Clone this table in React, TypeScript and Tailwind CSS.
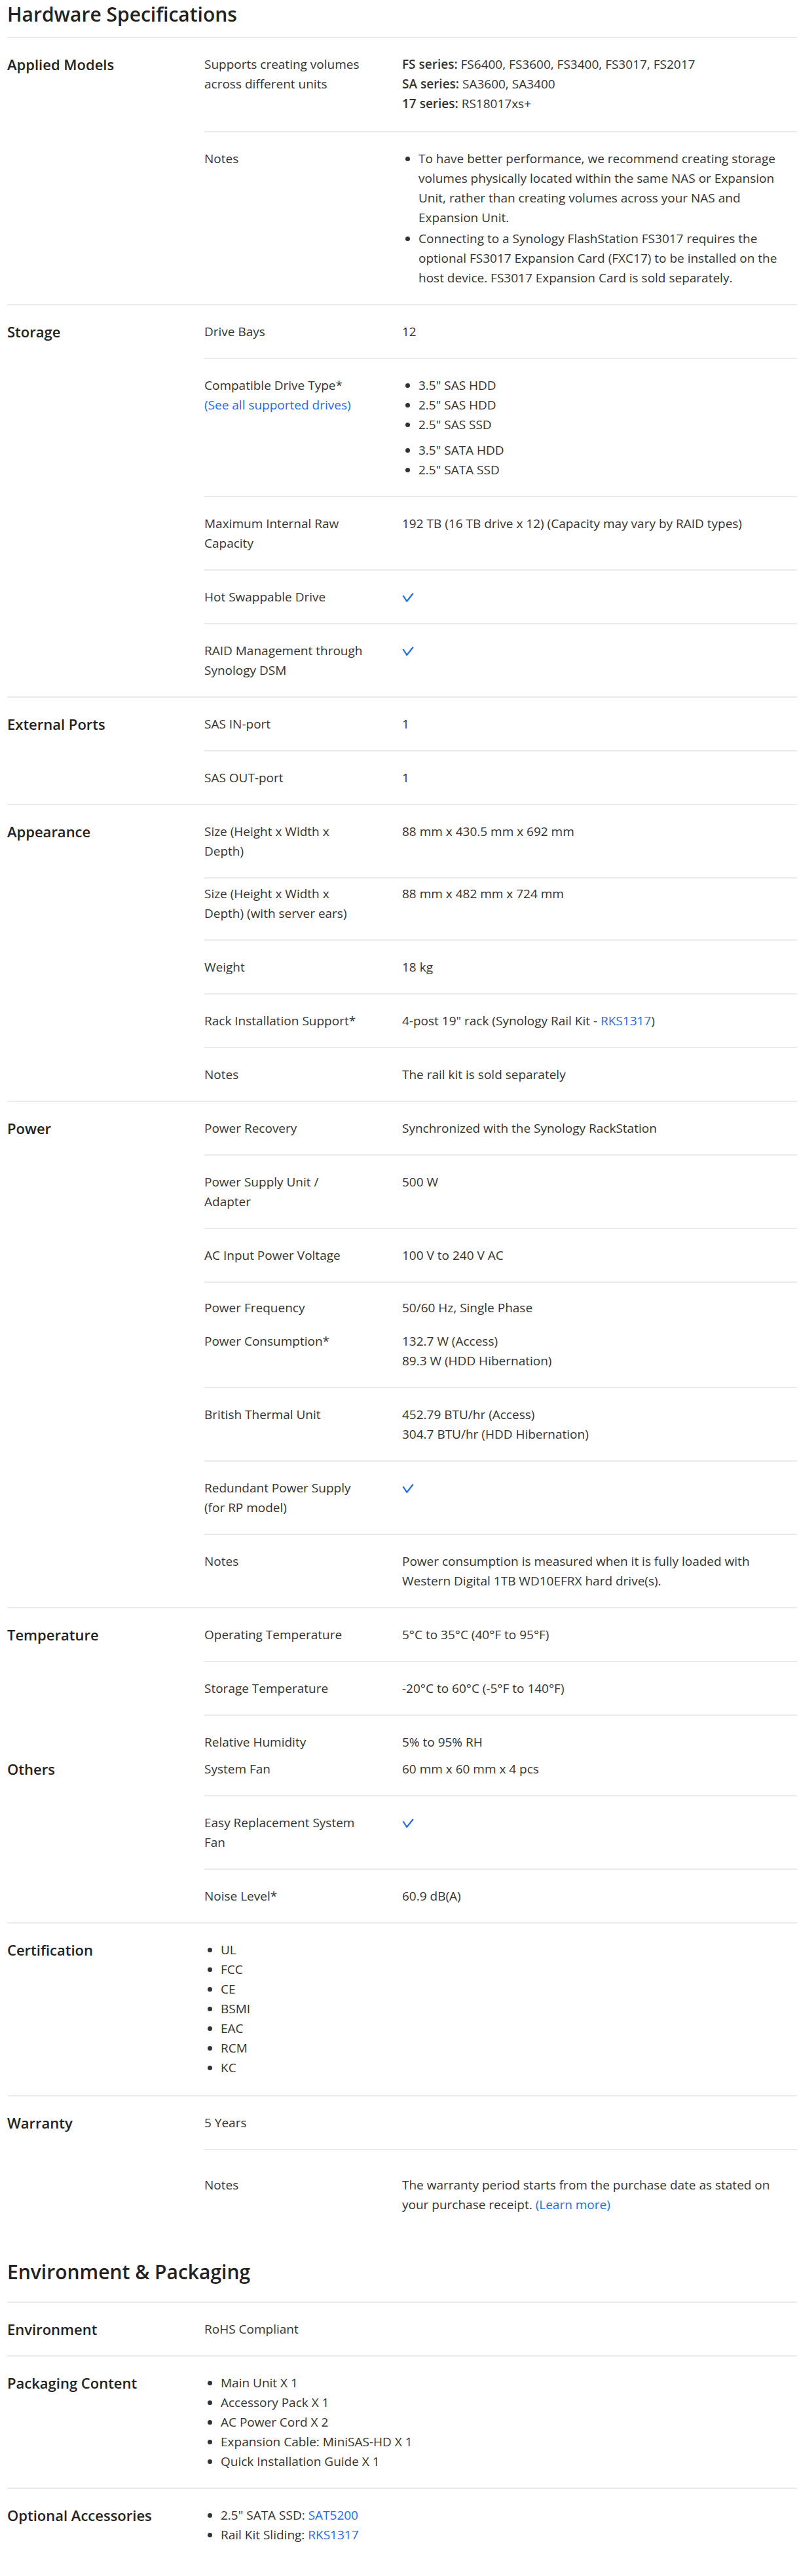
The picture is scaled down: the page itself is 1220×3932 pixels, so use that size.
import React from 'react';

const Check = () => (
  <svg width="18" height="14" viewBox="0 0 18 14" fill="none" className="mt-[9px]">
    <path d="M1.5 4 L7.2 12.8 L16.8 0.8" stroke="#1f6cf2" strokeWidth="2.2" strokeLinejoin="miter" />
  </svg>
);

const Link: React.FC<{ children: React.ReactNode }> = ({ children }) => (
  <a href="#" className="text-[#1f6cf2]">
    {children}
  </a>
);

const Section: React.FC<{
  title: string;
  top?: string;
  border?: boolean;
  children: React.ReactNode;
}> = ({ title, top = 'pt-[25px]', border = true, children }) => (
  <div className={`flex ${border ? 'border-t-2 border-[#ebebeb]' : ''}`}>
    <div className={`w-[301px] shrink-0 text-[22px] leading-[30px] font-semibold text-[#222] ${top}`}>
      {title}
    </div>
    <div className="flex-1">{children}</div>
  </div>
);

const Row: React.FC<{
  label?: React.ReactNode;
  first?: boolean;
  pad?: string;
  full?: boolean;
  children?: React.ReactNode;
}> = ({ label, first, pad = 'pt-[25px] pb-[25px]', full, children }) => (
  <div className={`flex ${first ? '' : 'border-t-2 border-[#ebebeb]'} ${pad}`}>
    {full ? (
      <div className="flex-1 pr-[17px]">{children}</div>
    ) : (
      <>
        <div className="w-[302px] shrink-0 pr-[55px]">{label}</div>
        <div className="flex-1 pr-[17px]">{children}</div>
      </>
    )}
  </div>
);

const Bullets: React.FC<{ items: React.ReactNode[]; className?: string }> = ({ items, className = '' }) => (
  <ul className={`list-disc pl-[25px] ${className}`}>
    {items.map((item, i) => (
      <li key={i}>{item}</li>
    ))}
  </ul>
);

export default function App() {
  return (
    <div className="bg-white font-['Open_Sans',sans-serif] text-[19px] leading-[30px] text-[#333] pl-[11px] pr-[3px] pb-[49px]">
      <h2 className="pt-[4px] pb-[16px] text-[30px] leading-[36px] font-semibold text-[#222]">
        Hardware Specifications
      </h2>

      <Section title="Applied Models">
        <Row first label="Supports creating volumes across different units" pad="pt-[25px] pb-[27px]">
          <p>
            <span className="font-semibold">FS series:</span> FS6400, FS3600, FS3400, FS3017, FS2017
          </p>
          <p>
            <span className="font-semibold">SA series:</span> SA3600, SA3400
          </p>
          <p>
            <span className="font-semibold">17 series:</span> RS18017xs+
          </p>
        </Row>
        <Row label="Notes">
          <ul className="list-disc pl-[25px]">
            <li>
              To have better performance, we recommend creating storage volumes physically located within the same NAS or
              Expansion Unit, rather than creating volumes across your NAS and Expansion Unit.
            </li>
            <li className="mt-[2px]">
              Connecting to a Synology FlashStation FS3017 requires the optional FS3017 Expansion Card (FXC17) to be installed
              on the host device. FS3017 Expansion Card is sold separately.
            </li>
          </ul>
        </Row>
      </Section>

      <Section title="Storage">
        <Row first label="Drive Bays">12</Row>
        <Row
          label={
            <>
              Compatible Drive Type*
              <br />
              <Link>(See all supported drives)</Link>
            </>
          }
        >
          <Bullets items={['3.5" SAS HDD', '2.5" SAS HDD', '2.5" SAS SSD']} />
          <Bullets className="mt-[9px]" items={['3.5" SATA HDD', '2.5" SATA SSD']} />
        </Row>
        <Row label="Maximum Internal Raw Capacity">192 TB (16 TB drive x 12) (Capacity may vary by RAID types)</Row>
        <Row label="Hot Swappable Drive">
          <Check />
        </Row>
        <Row label="RAID Management through Synology DSM">
          <Check />
        </Row>
      </Section>

      <Section title="External Ports">
        <Row first label="SAS IN-port">1</Row>
        <Row label="SAS OUT-port">1</Row>
      </Section>

      <Section title="Appearance">
        <Row first label="Size (Height x Width x Depth)">88 mm x 430.5 mm x 692 mm</Row>
        <Row label="Size (Height x Width x Depth) (with server ears)" pad="pt-[8px] pb-[25px]">
          88 mm x 482 mm x 724 mm
        </Row>
        <Row label="Weight">18 kg</Row>
        <Row label="Rack Installation Support*">
          4-post 19" rack (Synology Rail Kit - <Link>RKS1317</Link>)
        </Row>
        <Row label="Notes">The rail kit is sold separately</Row>
      </Section>

      <Section title="Power">
        <Row first label="Power Recovery">Synchronized with the Synology RackStation</Row>
        <Row label="Power Supply Unit / Adapter">500 W</Row>
        <Row label="AC Input Power Voltage">100 V to 240 V AC</Row>
        <Row label="Power Frequency" pad="pt-[23px] pb-[21px]">
          50/60 Hz, Single Phase
        </Row>
        <Row first label="Power Consumption*" pad="pt-0 pb-[25px]">
          <p>132.7 W (Access)</p>
          <p>89.3 W (HDD Hibernation)</p>
        </Row>
        <Row label="British Thermal Unit">
          <p>452.79 BTU/hr (Access)</p>
          <p>304.7 BTU/hr (HDD Hibernation)</p>
        </Row>
        <Row label="Redundant Power Supply (for RP model)">
          <Check />
        </Row>
        <Row label="Notes">
          Power consumption is measured when it is fully loaded with Western Digital 1TB WD10EFRX hard drive(s).
        </Row>
      </Section>

      <Section title="Temperature">
        <Row first label="Operating Temperature">5°C to 35°C (40°F to 95°F)</Row>
        <Row label="Storage Temperature">-20°C to 60°C (-5°F to 140°F)</Row>
        <Row label="Relative Humidity" pad="pt-[25px] pb-[11px]">
          5% to 95% RH
        </Row>
      </Section>

      <Section title="Others" border={false} top="pt-0">
        <Row first label="System Fan" pad="pt-0 pb-[25px]">
          60 mm x 60 mm x 4 pcs
        </Row>
        <Row label="Easy Replacement System Fan">
          <Check />
        </Row>
        <Row label="Noise Level*">60.9 dB(A)</Row>
      </Section>

      <Section title="Certification">
        <Row first full pad="pt-[25px] pb-[27px]">
          <Bullets items={['UL', 'FCC', 'CE', 'BSMI', 'EAC', 'RCM', 'KC']} />
        </Row>
      </Section>

      <Section title="Warranty">
        <Row first label="5 Years" />
        <Row label="Notes" pad="pt-[38px] pb-0">
          The warranty period starts from the purchase date as stated on your purchase receipt.{' '}
          <Link>(Learn more)</Link>
        </Row>
      </Section>

      <h2 className="mt-[70px] mb-[27px] text-[30px] leading-[36px] font-semibold text-[#222]">
        Environment &amp; Packaging
      </h2>

      <Section title="Environment">
        <Row first full>
          RoHS Compliant
        </Row>
      </Section>

      <Section title="Packaging Content">
        <Row first full>
          <Bullets
            items={[
              'Main Unit X 1',
              'Accessory Pack X 1',
              'AC Power Cord X 2',
              'Expansion Cable: MiniSAS-HD X 1',
              'Quick Installation Guide X 1',
            ]}
          />
        </Row>
      </Section>

      <Section title="Optional Accessories">
        <Row first full pad="pt-[25px] pb-0">
          <Bullets
            items={[
              <>
                2.5" SATA SSD: <Link>SAT5200</Link>
              </>,
              <>
                Rail Kit Sliding: <Link>RKS1317</Link>
              </>,
            ]}
          />
        </Row>
      </Section>
    </div>
  );
}
